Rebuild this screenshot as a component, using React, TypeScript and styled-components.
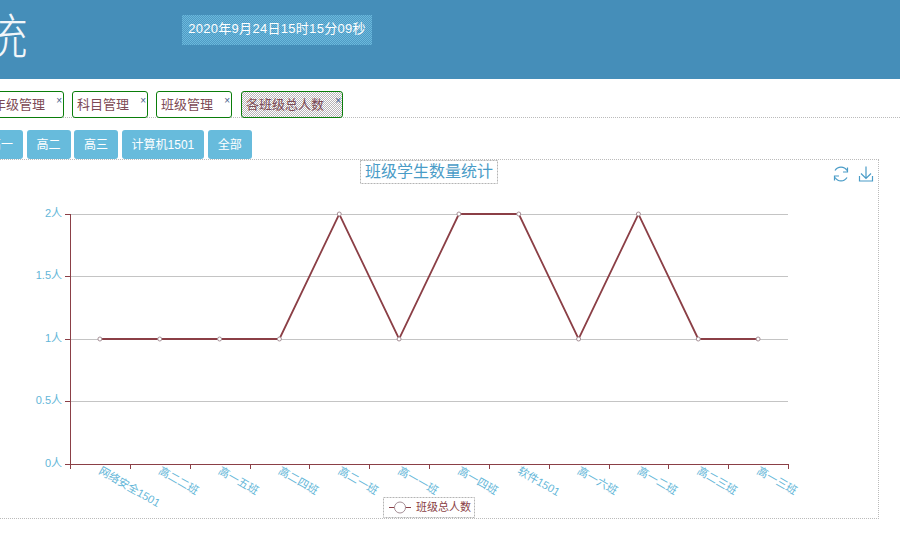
import React from 'react';
import styled, { createGlobalStyle } from 'styled-components';

const GlobalStyle = createGlobalStyle`
  html, body {
    margin: 0;
    padding: 0;
    background: #fff;
    overflow: hidden;
    font-family: "Liberation Sans", "Noto Sans CJK SC", sans-serif;
  }
`;

const tabs = [
  { name: '年级管理', width: 76 },
  { name: '科目管理', width: 76 },
  { name: '班级管理', width: 76 },
  { name: '各班级总人数', width: 102, active: true },
];
const filters = ['高一', '高二', '高三', '计算机1501', '全部'];
const classes = [
  { name: '网络安全1501', value: 1 },
  { name: '高二二班', value: 1 },
  { name: '高一五班', value: 1 },
  { name: '高二四班', value: 1 },
  { name: '高二一班', value: 2 },
  { name: '高一一班', value: 1 },
  { name: '高一四班', value: 2 },
  { name: '软件1501', value: 2 },
  { name: '高一六班', value: 1 },
  { name: '高一二班', value: 2 },
  { name: '高二三班', value: 1 },
  { name: '高一三班', value: 1 },
];
const yTicks = [
  { label: '2人', y: 214 },
  { label: '1.5人', y: 276 },
  { label: '1人', y: 339 },
  { label: '0.5人', y: 401 },
  { label: '0人', y: 464 },
];

const AXIS_LEFT = 70;
const AXIS_RIGHT = 788;
const AXIS_BOTTOM = 464;
const STEP = (AXIS_RIGHT - AXIS_LEFT) / 12;
const pointX = (i: number) => AXIS_LEFT + STEP * (i + 0.5);
const pointY = (v: number) => AXIS_BOTTOM - v * 125;

const App = () => {
  const line = classes.map((c, i) => `${pointX(i)},${pointY(c.value)}`).join(' ');
  return (
    <Page>
      <GlobalStyle />
      <Header>
        <Logo>系统</Logo>
        <Clock>2020年9月24日15时15分09秒</Clock>
      </Header>
      <TabBar>
        {tabs.map((t) => (
          <Tab key={t.name} $width={t.width} $active={t.active}>
            {t.name}
            <Close>×</Close>
          </Tab>
        ))}
      </TabBar>
      <FilterBar>
        {filters.map((f) => (
          <FilterButton key={f}>{f}</FilterButton>
        ))}
      </FilterBar>
      <ChartPanel>
        <ChartSvg viewBox="0 160 878 358">
          <rect x="360.5" y="160.5" width="137" height="23" fill="none" stroke="#b4b4b4" strokeDasharray="2 1" />
          <text x="429" y="177" textAnchor="middle" fontSize="16" fill="#4a9cc7">
            班级学生数量统计
          </text>

          <g fill="none" stroke="#4a9cc7" strokeWidth="1.2">
            <path d="M835 170.5 A7 7 0 0 1 847 170.5 M847 177.5 A7 7 0 0 1 835 177.5" />
            <path d="M847.5 167.5 V172 H843 M834.5 180.5 V176 H839" />
            <path d="M866 166.5 V178 M861 173.5 L866 178.5 L871 173.5 M859.5 176 V181 H872.5 V176" />
          </g>

          {yTicks.map((t) => (
            <g key={t.label}>
              {t.y !== AXIS_BOTTOM && (
                <line x1={AXIS_LEFT} x2={AXIS_RIGHT} y1={t.y + 0.5} y2={t.y + 0.5} stroke="#c4c4c4" />
              )}
              <line x1={AXIS_LEFT - 5} x2={AXIS_LEFT} y1={t.y + 0.5} y2={t.y + 0.5} stroke="#8b3f46" />
              <text x={AXIS_LEFT - 8} y={t.y + 3} textAnchor="end" fontSize="11" fill="#63b6d8">
                {t.label}
              </text>
            </g>
          ))}

          <line x1={AXIS_LEFT + 0.5} x2={AXIS_LEFT + 0.5} y1="214" y2={AXIS_BOTTOM + 5} stroke="#8b3f46" />
          <line x1={AXIS_LEFT - 5} x2={AXIS_RIGHT + 1} y1={AXIS_BOTTOM + 0.5} y2={AXIS_BOTTOM + 0.5} stroke="#8b3f46" />
          {classes.map((c, i) => (
            <line
              key={c.name}
              x1={Math.round(AXIS_LEFT + STEP * (i + 1)) + 0.5}
              x2={Math.round(AXIS_LEFT + STEP * (i + 1)) + 0.5}
              y1={AXIS_BOTTOM}
              y2={AXIS_BOTTOM + 5}
              stroke="#8b3f46"
            />
          ))}

          {classes.map((c, i) => (
            <text
              key={c.name}
              transform={`translate(${pointX(i) - 2} 473) rotate(30)`}
              fontSize="11"
              fill="#63b6d8"
            >
              {c.name}
            </text>
          ))}

          <polyline points={line} fill="none" stroke="#8b3f46" strokeWidth="1.8" />
          {classes.map((c, i) => (
            <circle key={c.name} cx={pointX(i)} cy={pointY(c.value)} r="2" fill="#fff" stroke="#a58f96" />
          ))}

          <rect x="383.5" y="497.5" width="91" height="20" fill="#fff" stroke="#b4b4b4" strokeDasharray="2 1" />
          <line x1="389" x2="411" y1="507.5" y2="507.5" stroke="#8b3f46" />
          <circle cx="400" cy="507.5" r="5.5" fill="#fff" stroke="#a58f96" />
          <text x="416" y="511" fontSize="11" fill="#8b3f46">
            班级总人数
          </text>
        </ChartSvg>
      </ChartPanel>
    </Page>
  );
};

const Page = styled.div`
  width: 900px;
  height: 545px;
  overflow: hidden;
`;

const Header = styled.header`
  height: 79px;
  background: #458eb9;
  display: flex;
  align-items: flex-start;
`;

const Logo = styled.div`
  width: 182px;
  height: 79px;
  padding-top: 12px;
  box-sizing: border-box;
  font-size: 48px;
  line-height: 52px;
  font-weight: 300;
  color: #f2f6f9;
  white-space: nowrap;
  flex: none;
  text-indent: -68px;
`;

const Clock = styled.div`
  margin-top: 15px;
  width: 190px;
  height: 30px;
  line-height: 28px;
  text-align: center;
  font-size: 13px;
  letter-spacing: 0.3px;
  color: #fff;
  background: repeating-conic-gradient(#6bb9dc 0 25%, #4f9ac4 0 50%) 0 0 / 2px 2px;
`;

const TabBar = styled.div`
  height: 39px;
  margin-left: -12px;
  padding-top: 12px;
  box-sizing: border-box;
  display: flex;
  gap: 8px;
  border-bottom: 1px dotted #bbb;
`;

const Tab = styled.div<{ $width: number; $active?: boolean }>`
  position: relative;
  width: ${(p) => p.$width}px;
  height: 27px;
  margin-left: ${(p) => (p.$active ? '1px' : '0')};
  padding-left: 4px;
  box-sizing: border-box;
  border: 1px solid #0a7d0a;
  border-radius: 3px;
  font-size: 13px;
  line-height: 25px;
  color: #7d4a55;
  background: ${(p) =>
    p.$active ? 'repeating-conic-gradient(#b8b4b8 0 25%, #fff 0 50%) 0 0 / 2px 2px' : '#fff'};
`;

const Close = styled.span`
  position: absolute;
  top: 4px;
  right: 1px;
  font-size: 10px;
  line-height: 10px;
  color: #45608a;
`;

const FilterBar = styled.div`
  margin-left: -21px;
  padding-top: 12px;
  display: flex;
  gap: 3.5px;
  width: fit-content;
`;

const FilterButton = styled.div`
  height: 29px;
  padding: 0 10px;
  border-radius: 3px;
  background: #67bbdc;
  color: #fff;
  font-size: 12px;
  line-height: 30px;
`;

const ChartPanel = styled.div`
  width: 899px;
  height: 360px;
  margin-left: -20px;
  box-sizing: border-box;
  border: 1px dotted #bbb;
`;

const ChartSvg = styled.svg`
  display: block;
  width: 878px;
  height: 358px;
  margin-left: 19px;
  font-family: "Liberation Sans", "Noto Sans CJK SC", sans-serif;
`;

export default App;
